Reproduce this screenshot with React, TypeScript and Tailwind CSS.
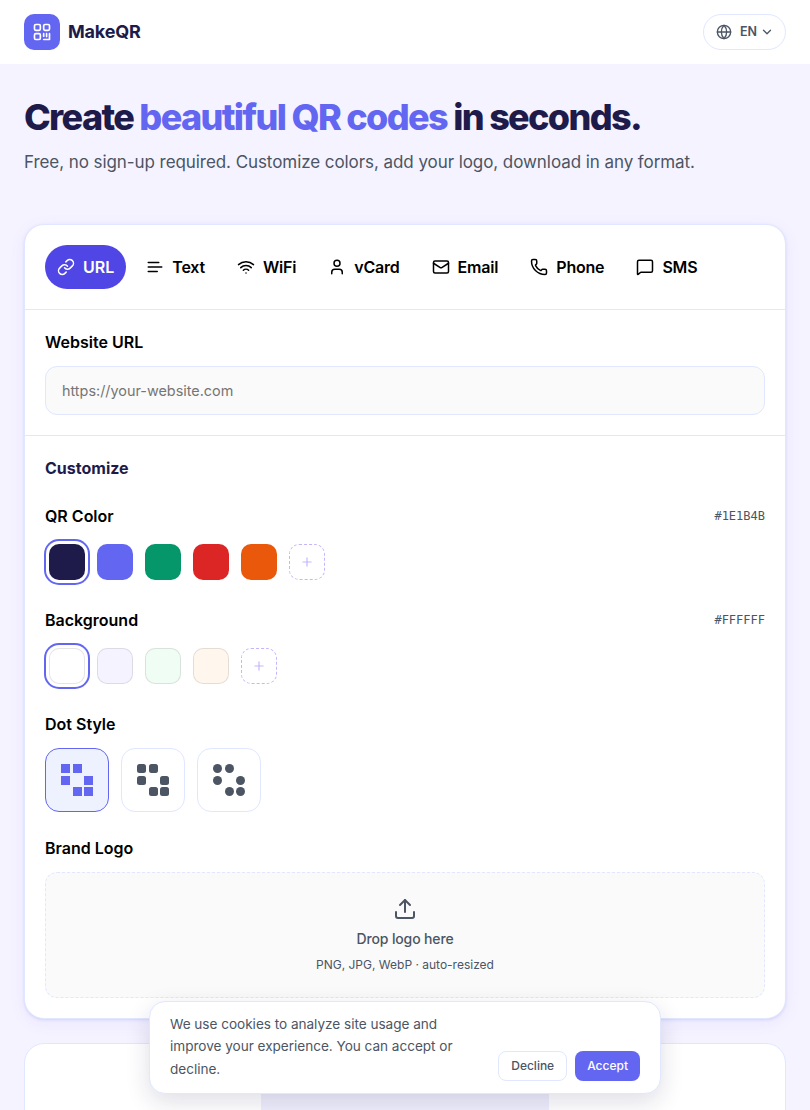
import { ChevronDown, Globe, Link, Mail, MessageSquare, Phone, Plus, Upload, User, Wifi } from 'lucide-react'

function TextLines({ size = 18 }: { size?: number }) {
  return (
    <svg width={size} height={size} viewBox="0 0 24 24" fill="none" stroke="currentColor" strokeWidth="2" strokeLinecap="round" strokeLinejoin="round">
      <path d="M17 6H3M21 12H3M15 18H3" />
    </svg>
  )
}

const tabs = [
  { label: 'Text', icon: TextLines },
  { label: 'WiFi', icon: Wifi },
  { label: 'vCard', icon: User },
  { label: 'Email', icon: Mail },
  { label: 'Phone', icon: Phone },
  { label: 'SMS', icon: MessageSquare },
]

const qrColors = ['bg-[#6366f1]', 'bg-[#059669]', 'bg-[#dc2626]', 'bg-[#ea580c]']
const bgColors = ['bg-[#f5f3ff]', 'bg-[#f0fdf4]', 'bg-[#fff7ed]']

function AddSwatch() {
  return (
    <div className="flex h-9 w-9 items-center justify-center rounded-[10px] border border-dashed border-[#c4b5fd] text-[#c4b5fd]">
      <Plus size={14} />
    </div>
  )
}

function DotIcon({ radius, fill }: { radius: number; fill: string }) {
  const cells = [
    [0, 0],
    [12, 0],
    [0, 12],
    [23, 12],
    [12, 23],
    [23, 23],
  ]
  return (
    <svg width="32" height="32" viewBox="0 0 32 32">
      {cells.map(([x, y]) => (
        <rect key={`${x}-${y}`} x={x} y={y} width="9" height="9" rx={radius} fill={fill} />
      ))}
    </svg>
  )
}

function SectionRow({ title, hex }: { title: string; hex: string }) {
  return (
    <div className="flex items-center justify-between">
      <span className="text-base font-semibold leading-6 text-black">{title}</span>
      <span className="font-['DejaVu_Sans_Mono',monospace] text-xs text-[#4b5563]">{hex}</span>
    </div>
  )
}

export default function App() {
  return (
    <div className="relative h-[1110px] overflow-hidden bg-[#f5f3ff] font-['Inter',sans-serif]">
      {/* Header */}
      <header className="flex h-16 items-center justify-between bg-white px-6">
        <div className="flex items-center gap-2">
          <div className="flex h-9 w-9 items-center justify-center rounded-[10px] bg-[#6366f1]">
            <svg width="20" height="20" viewBox="0 0 24 24" fill="none" stroke="white" strokeWidth="2" strokeLinecap="round" strokeLinejoin="round">
              <rect x="3" y="3" width="7" height="7" rx="1.5" />
              <rect x="14" y="3" width="7" height="7" rx="1.5" />
              <rect x="3" y="14" width="7" height="7" rx="1.5" />
              <path d="M14 14v3M14 21h7M21 14v7M17.5 14v3.5" />
            </svg>
          </div>
          <span className="text-lg font-bold tracking-[-0.01em] text-[#1e1b4b]">MakeQR</span>
        </div>
        <div className="flex h-9 items-center rounded-full border border-[#e0e7ff] pl-3 pr-[11px] text-[#4b5563]">
          <Globe size={16} />
          <span className="ml-2 mr-[3px] text-[12.5px] font-semibold">EN</span>
          <ChevronDown size={14} strokeWidth={2.2} />
        </div>
      </header>

      <main className="px-6">
        {/* Hero */}
        <h1 className="mt-[31px] text-[36px] font-extrabold leading-[44px] tracking-[-0.046em] text-[#1e1b4b]">
          Create <span className="text-[#6366f1]">beautiful QR codes</span> in seconds.
        </h1>
        <p className="mt-[11px] text-[17px] leading-6 tracking-[-0.07px] text-[#4b5563]">
          Free, no sign-up required. Customize colors, add your logo, download in any format.
        </p>

        {/* Generator card */}
        <section className="mt-[50px] rounded-[20px] border border-[#e0e7ff] bg-white shadow-[0_1px_3px_rgba(79,70,229,0.15),0_4px_16px_rgba(99,102,241,0.08)]">
          <div className="flex h-[85px] items-center gap-2 border-b border-[#e0e7ff] px-5">
            <button className="flex h-11 items-center gap-2 rounded-full bg-[#4f46e5] px-3 text-base font-semibold text-white">
              <Link size={18} />
              URL
            </button>
            {tabs.map(({ label, icon: Icon }) => (
              <button key={label} className="flex h-11 items-center gap-2 rounded-full px-3 text-base font-semibold tracking-[-0.2px] text-black">
                <Icon size={18} />
                {label}
              </button>
            ))}
          </div>

          <div className="border-b border-[#e0e7ff] p-5">
            <div className="text-base font-semibold leading-6 text-black">Website URL</div>
            <div className="mt-3 flex h-[49px] items-center rounded-xl border border-[#e0e7ff] bg-[#fafafa] px-4 text-[14.4px] text-[#757575]">
              https://your-website.com
            </div>
          </div>

          <div className="p-5">
            <div className="text-base font-bold leading-6 text-[#1e1b4b]">Customize</div>

            <div className="mt-6">
              <SectionRow title="QR Color" hex="#1E1B4B" />
              <div className="mt-4 flex items-center gap-3 pl-1">
                <div className="h-9 w-9 rounded-[10px] bg-[#1e1b4b] shadow-[0_0_0_3px_#ffffff,0_0_0_5px_#6366f1]" />
                {qrColors.map((c) => (
                  <div key={c} className={`h-9 w-9 rounded-[10px] ${c}`} />
                ))}
                <AddSwatch />
              </div>
            </div>

            <div className="mt-7">
              <SectionRow title="Background" hex="#FFFFFF" />
              <div className="mt-4 flex items-center gap-3 pl-1">
                <div className="h-9 w-9 rounded-[10px] border border-black/10 bg-white shadow-[0_0_0_3px_#ffffff,0_0_0_5px_#6366f1]" />
                {bgColors.map((c) => (
                  <div key={c} className={`h-9 w-9 rounded-[10px] border border-black/10 ${c}`} />
                ))}
                <AddSwatch />
              </div>
            </div>

            <div className="mt-7">
              <div className="text-base font-semibold leading-6 text-black">Dot Style</div>
              <div className="mt-3 flex gap-3">
                <div className="flex h-16 w-16 items-center justify-center rounded-[14px] border border-[#6366f1] bg-[#eef2ff]">
                  <DotIcon radius={0} fill="#6366f1" />
                </div>
                <div className="flex h-16 w-16 items-center justify-center rounded-[14px] border border-[#e0e7ff] bg-white">
                  <DotIcon radius={2.5} fill="#4b5563" />
                </div>
                <div className="flex h-16 w-16 items-center justify-center rounded-[14px] border border-[#e0e7ff] bg-white">
                  <DotIcon radius={4.5} fill="#4b5563" />
                </div>
              </div>
            </div>

            <div className="mt-6">
              <div className="text-base font-semibold leading-6 text-black">Brand Logo</div>
              <div className="mt-3 flex h-[126px] flex-col items-center rounded-xl border border-dashed border-[#e0e7ff] bg-[#fafafa] pt-6">
                <Upload size={24} className="text-[#4b5563]" />
                <div className="mt-2 text-sm font-medium leading-5 tracking-[-0.01em] text-[#4b5563]">Drop logo here</div>
                <div className="mt-[6px] text-xs leading-5 text-[#4b5563]">PNG, JPG, WebP · auto-resized</div>
              </div>
            </div>
          </div>
        </section>

        {/* Preview card */}
        <section className="mt-6 rounded-[20px] border border-[#e0e7ff] bg-white pt-[49px]">
          <div className="mx-auto h-[300px] w-[288px] bg-[#eeeefc]" />
        </section>
      </main>

      {/* Cookie banner */}
      <div className="absolute bottom-4 left-[149px] flex w-[512px] items-end justify-between rounded-2xl border border-[#e0e7ff] bg-white px-5 py-3 shadow-[0_8px_24px_rgba(30,27,75,0.14)]">
        <p className="-mt-px mb-px w-[300px] text-[13.6px] leading-[1.65] tracking-[-0.03px] text-[#4b5563]">
          We use cookies to analyze site usage and improve your experience. You can accept or decline.
        </p>
        <div className="flex gap-2">
          <button className="h-[30px] rounded-lg border border-[#e0e7ff] bg-white px-3 text-xs font-medium text-[#4b5563]">Decline</button>
          <button className="h-[30px] rounded-lg bg-[#6366f1] px-3 text-xs font-medium text-white">Accept</button>
        </div>
      </div>
    </div>
  )
}
